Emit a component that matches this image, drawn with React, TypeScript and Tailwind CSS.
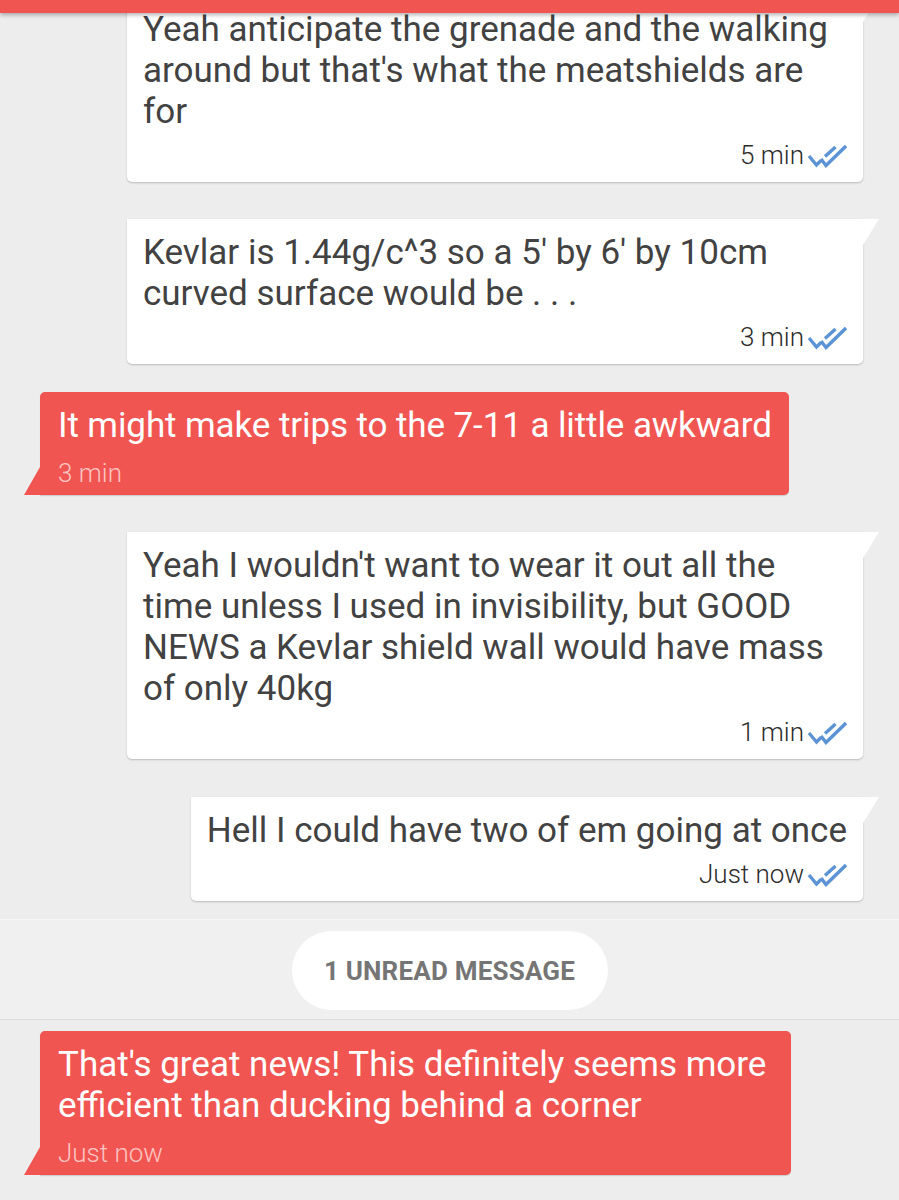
import React from 'react';

const RED = 'bg-[#f15551]';

interface Message {
  text: string;
  time: string;
  gap: string;
  tight?: boolean;
}

// Blue double tick shown beside the time on sent messages
const ReadTicks = () => (
  <svg width="40" height="24" viewBox="0 0 40 24" fill="none" className="ml-[3px] shrink-0">
    <path d="M2 12 L9.5 21 L14 16.5" stroke="#5b93d5" strokeWidth="3.4" />
    <path d="M18 12.5 L28.5 3" stroke="#5b93d5" strokeWidth="3.4" />
    <path d="M14 15 L19 21.5 L39 2" stroke="#5b93d5" strokeWidth="3.4" />
  </svg>
);

const SentBubble = ({ text, time, gap }: Message) => (
  <div
    className={`relative self-end mr-9 max-w-[736px] w-fit bg-white rounded-br-[5px] rounded-bl-[5px] shadow-[0_1px_2px_rgba(0,0,0,0.22)] pl-[16px] pr-4 pt-[13px] pb-[7px] ${gap}`}
  >
    <svg width="16" height="26" viewBox="0 0 16 26" className="absolute top-0 left-full">
      <polygon points="0,0 16,0 0,26" fill="#ffffff" />
    </svg>
    <p className="text-[35px] leading-[41px] text-[#424242] m-0">{text}</p>
    <div className="flex items-center justify-end h-[39px] mt-[4px] text-[26px] font-light text-[#2b2b2b]">
      <span>{time}</span>
      <ReadTicks />
    </div>
  </div>
);

const ReceivedBubble = ({ text, time, gap, tight }: Message) => (
  <div
    className={`relative self-start ml-10 max-w-[751px] w-fit ${RED} rounded-tl-[5px] rounded-tr-[5px] rounded-br-[5px] shadow-[0_1px_1px_rgba(0,0,0,0.15)] pl-[18px] pr-[17px] pt-[13px] pb-[2px] ${gap}`}
  >
    <svg width="16" height="28" viewBox="0 0 16 28" className="absolute bottom-0 right-full">
      <polygon points="16,0 16,28 0,28" fill="#f15551" />
    </svg>
    <p className={`text-[35px] leading-[41px] text-white m-0 ${tight ? 'tracking-[-0.1px]' : ''}`}>{text}</p>
    <div className="flex items-center h-[39px] mt-[8px] text-[26px] font-light text-[#fcc4c1]">
      {time}
    </div>
  </div>
);

const UnreadDivider = () => (
  <div className="mt-[18px] h-[101px] flex items-center justify-center bg-[#f0f0f0] border-t border-t-[#f5f5f5] border-b border-b-[#dcdcdc]">
    <div className="w-[316px] h-[79px] mt-[1px] pt-[3px] rounded-full bg-white flex items-center justify-center text-[26px] font-bold tracking-[0.2px] text-[#757575]">
      1 UNREAD MESSAGE
    </div>
  </div>
);

export default function App() {
  return (
    <div className="h-[1200px] w-full overflow-hidden bg-[#ededed] flex flex-col font-['Roboto',sans-serif]">
      <div className={`relative z-10 h-[13px] shrink-0 ${RED} shadow-[0_2px_4px_rgba(0,0,0,0.3)]`} />
      <SentBubble
        gap="mt-[-17px]"
        text="Yeah anticipate the grenade and the walking around but that's what the meatshields are for"
        time="5 min"
      />
      <SentBubble
        gap="mt-[37px]"
        text="Kevlar is 1.44g/c^3 so a 5' by 6' by 10cm curved surface would be . . ."
        time="3 min"
      />
      <ReceivedBubble
        gap="mt-[28px]"
        tight
        text="It might make trips to the 7-11 a little awkward"
        time="3 min"
      />
      <SentBubble
        gap="mt-[37px]"
        text="Yeah I wouldn't want to wear it out all the time unless I used in invisibility, but GOOD NEWS a Kevlar shield wall would have mass of only 40kg"
        time="1 min"
      />
      <SentBubble
        gap="mt-[38px]"
        text="Hell I could have two of em going at once"
        time="Just now"
      />
      <UnreadDivider />
      <ReceivedBubble
        gap="mt-[11px]"
        text="That's great news! This definitely seems more efficient than ducking behind a corner"
        time="Just now"
      />
    </div>
  );
}
